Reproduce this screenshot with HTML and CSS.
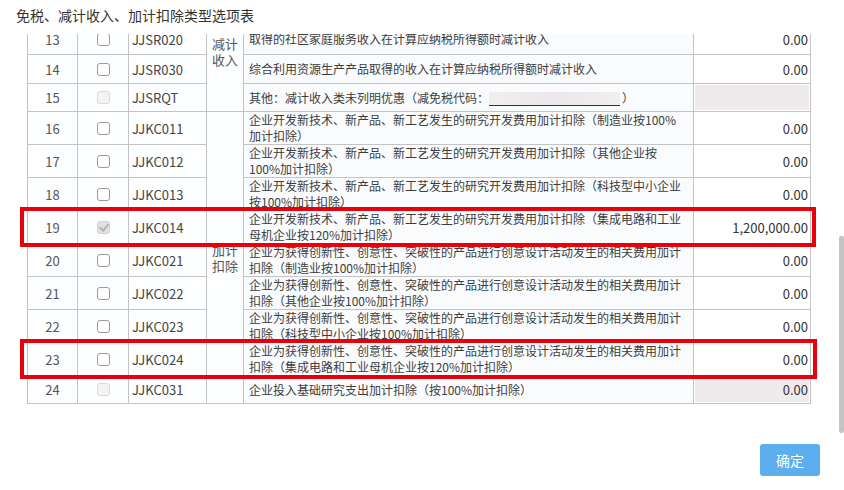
FILE: index.html
```html
<!DOCTYPE html>
<html lang="zh-CN">
<head>
<meta charset="utf-8">
<title>免税、减计收入、加计扣除类型选项表</title>
<link rel="stylesheet" href="styles.css">
</head>
<body>
<div class="dialog">
  <div class="title">免税、减计收入、加计扣除类型选项表</div>
  <div class="content">
    <div class="table-wrap">
      <table class="grid">
        <colgroup>
          <col class="c-no"><col class="c-chk"><col class="c-code"><col class="c-cat"><col class="c-desc"><col class="c-amt">
        </colgroup>
        <tbody>
          <tr class="s">
            <td class="no">13</td>
            <td class="chk"><input type="checkbox" class="cb"></td>
            <td class="code">JJSR020</td>
            <td class="cat cat-top" rowspan="3">减计<br>收入</td>
            <td class="desc">取得的社区家庭服务收入在计算应纳税所得额时减计收入</td>
            <td class="amt"><div class="amt-box">0.00</div></td>
          </tr>
          <tr class="s">
            <td class="no">14</td>
            <td class="chk"><input type="checkbox" class="cb"></td>
            <td class="code">JJSR030</td>
            <td class="desc">综合利用资源生产产品取得的收入在计算应纳税所得额时减计收入</td>
            <td class="amt"><div class="amt-box">0.00</div></td>
          </tr>
          <tr class="s2">
            <td class="no">15</td>
            <td class="chk"><input type="checkbox" class="cb" disabled></td>
            <td class="code">JJSRQT</td>
            <td class="desc">其他：减计收入类未列明优惠（减免税代码：<span class="code-input"></span>）</td>
            <td class="amt"><div class="amt-box off"></div></td>
          </tr>
          <tr class="d">
            <td class="no">16</td>
            <td class="chk"><input type="checkbox" class="cb"></td>
            <td class="code">JJKC011</td>
            <td class="cat" rowspan="9">加计<br>扣除</td>
            <td class="desc">企业开发新技术、新产品、新工艺发生的研究开发费用加计扣除（制造业按100%<br>加计扣除）</td>
            <td class="amt"><div class="amt-box">0.00</div></td>
          </tr>
          <tr class="d">
            <td class="no">17</td>
            <td class="chk"><input type="checkbox" class="cb"></td>
            <td class="code">JJKC012</td>
            <td class="desc">企业开发新技术、新产品、新工艺发生的研究开发费用加计扣除（其他企业按<br>100%加计扣除）</td>
            <td class="amt"><div class="amt-box">0.00</div></td>
          </tr>
          <tr class="d">
            <td class="no">18</td>
            <td class="chk"><input type="checkbox" class="cb"></td>
            <td class="code">JJKC013</td>
            <td class="desc">企业开发新技术、新产品、新工艺发生的研究开发费用加计扣除（科技型中小企业<br>按100%加计扣除）</td>
            <td class="amt"><div class="amt-box">0.00</div></td>
          </tr>
          <tr class="d">
            <td class="no">19</td>
            <td class="chk"><input type="checkbox" class="cb" checked disabled></td>
            <td class="code">JJKC014</td>
            <td class="desc">企业开发新技术、新产品、新工艺发生的研究开发费用加计扣除（集成电路和工业<br>母机企业按120%加计扣除）</td>
            <td class="amt"><div class="amt-box">1,200,000.00</div></td>
          </tr>
          <tr class="d">
            <td class="no">20</td>
            <td class="chk"><input type="checkbox" class="cb"></td>
            <td class="code">JJKC021</td>
            <td class="desc">企业为获得创新性、创意性、突破性的产品进行创意设计活动发生的相关费用加计<br>扣除（制造业按100%加计扣除）</td>
            <td class="amt"><div class="amt-box">0.00</div></td>
          </tr>
          <tr class="d">
            <td class="no">21</td>
            <td class="chk"><input type="checkbox" class="cb"></td>
            <td class="code">JJKC022</td>
            <td class="desc">企业为获得创新性、创意性、突破性的产品进行创意设计活动发生的相关费用加计<br>扣除（其他企业按100%加计扣除）</td>
            <td class="amt"><div class="amt-box">0.00</div></td>
          </tr>
          <tr class="d">
            <td class="no">22</td>
            <td class="chk"><input type="checkbox" class="cb"></td>
            <td class="code">JJKC023</td>
            <td class="desc">企业为获得创新性、创意性、突破性的产品进行创意设计活动发生的相关费用加计<br>扣除（科技型中小企业按100%加计扣除）</td>
            <td class="amt"><div class="amt-box">0.00</div></td>
          </tr>
          <tr class="d">
            <td class="no">23</td>
            <td class="chk"><input type="checkbox" class="cb"></td>
            <td class="code">JJKC024</td>
            <td class="desc">企业为获得创新性、创意性、突破性的产品进行创意设计活动发生的相关费用加计<br>扣除（集成电路和工业母机企业按120%加计扣除）</td>
            <td class="amt"><div class="amt-box">0.00</div></td>
          </tr>
          <tr class="s2">
            <td class="no">24</td>
            <td class="chk"><input type="checkbox" class="cb" disabled></td>
            <td class="code">JJKC031</td>
            <td class="desc">企业投入基础研究支出加计扣除（按100%加计扣除）</td>
            <td class="amt"><div class="amt-box off">0.00</div></td>
          </tr>
        </tbody>
      </table>
    </div>
    <div class="footer">
      <button class="btn-ok" type="button">确定</button>
    </div>
  </div>
  <div class="mark mark-19"></div>
  <div class="mark mark-23"></div>
  <div class="scroll-thumb"></div>
</div>
</body>
</html>
```

FILE: styles.css
```css
html, body {
  margin: 0;
  padding: 0;
  background: #ffffff;
}

body {
  font-family: "Noto Sans CJK SC", "Microsoft YaHei", sans-serif;
  color: #3a3a3a;
}

.dialog {
  position: relative;
  width: 844px;
  height: 490px;
  overflow: hidden;
  background: #ffffff;
}

.title {
  height: 34px;
  padding-left: 16px;
  font-size: 14px;
  line-height: 30px;
  color: #333333;
  background: #ffffff;
}

.content {
  height: 456px;
  overflow: hidden;
  display: flow-root;
}

.table-wrap {
  margin-top: -11px;
  margin-left: 27px;
  width: 783px;
}

.grid {
  width: 783px;
  table-layout: fixed;
  border-collapse: collapse;
  background: #fdfeff;
}

.c-no { width: 50px; }
.c-chk { width: 51px; }
.c-code { width: 78px; }
.c-cat { width: 37px; }
.c-desc { width: 450px; }
.c-amt { width: 117px; }

.grid td {
  border: 1px solid #c4c4c4;
  padding: 0;
  vertical-align: middle;
  white-space: nowrap;
  overflow: hidden;
}

.grid tr.s { height: 29px; }
.grid tr.s2 { height: 28px; }
.grid tr.d { height: 33px; }

.grid tr:first-child { height: 31px; }

.no {
  text-align: center;
  font-size: 13px;
  color: #555555;
}

.chk {
  text-align: center;
  line-height: 0;
}

.cb {
  appearance: none;
  -webkit-appearance: none;
  width: 13px;
  height: 13px;
  margin: 0;
  border: 1px solid #9a9a9a;
  border-radius: 3px;
  background: #ffffff;
  box-sizing: border-box;
  position: relative;
  vertical-align: middle;
}

.cb:disabled {
  border-color: #dadada;
  background: #f3f3f3;
}

.cb:checked:disabled {
  background: #e2e2e2;
  border-color: #d2d2d2;
}

.cb:checked::after {
  content: "";
  position: absolute;
  left: 3px;
  top: 0px;
  width: 4px;
  height: 7px;
  border-right: 2px solid #b3b3b3;
  border-bottom: 2px solid #b3b3b3;
  transform: rotate(40deg);
}

.code {
  padding-left: 3px !important;
  font-size: 13px;
  color: #444444;
}

.cat {
  text-align: center;
  font-size: 13px;
  line-height: 16px;
  color: #555555;
}

.grid td.cat-top {
  vertical-align: top;
  padding-top: 12px;
}

.desc {
  padding: 0 5px !important;
  font-size: 12px;
  line-height: 16px;
  background: #f9fbfd;
  color: #3d3d3d;
}

.code-input {
  display: inline-block;
  width: 131px;
  height: 13px;
  margin: 0 2px 0 0;
  border-bottom: 1px solid #333333;
  background: linear-gradient(90deg, #f1eef0 0%, #ebe7ea 50%, #f1eef0 100%);
  vertical-align: -3px;
}

.amt {
  padding: 1px !important;
  background: #ffffff;
}

.amt-box {
  display: flex;
  align-items: center;
  justify-content: flex-end;
  padding-right: 1px;
  font-size: 13px;
  color: #333333;
}

tr.s .amt-box { height: 26px; }
tr.s2 .amt-box { height: 25px; }
tr.d .amt-box { height: 30px; }
tr:first-child .amt-box { height: 28px; }

.amt-box.off {
  background: #efebec;
}

.footer {
  display: flex;
  justify-content: flex-end;
  padding: 40px 24px 0 0;
}

.btn-ok {
  width: 60px;
  height: 32px;
  border: none;
  border-radius: 3px;
  background: #5caeee;
  color: #ffffff;
  font-family: "Noto Sans CJK SC", "Microsoft YaHei", sans-serif;
  font-size: 14px;
  padding: 0;
}

.mark {
  position: absolute;
  box-sizing: border-box;
  border: 4px solid #e8000b;
  pointer-events: none;
}

.mark-19 {
  left: 20px;
  top: 207px;
  width: 796px;
  height: 40px;
}

.mark-23 {
  left: 20px;
  top: 339px;
  width: 797px;
  height: 40px;
}

.scroll-thumb {
  position: absolute;
  left: 839px;
  top: 236px;
  width: 5px;
  height: 197px;
  border-radius: 2px;
  background: #c4c4c4;
}
```
